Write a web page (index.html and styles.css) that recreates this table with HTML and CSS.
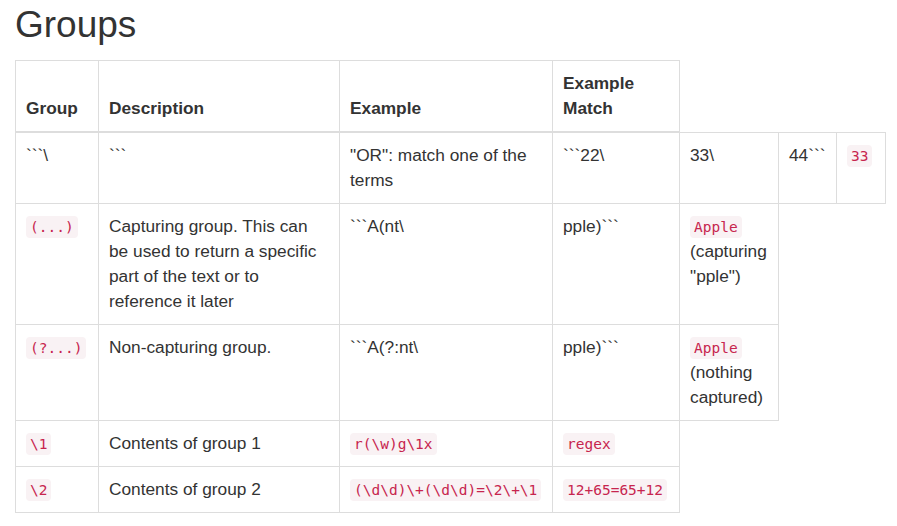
FILE: index.html
```html
<!DOCTYPE html>
<html>
<head>
<meta charset="utf-8">
<link rel="stylesheet" href="styles.css">
</head>
<body>
<div class="page">
  <h1 class="title">Groups</h1>
  <table class="grid">
    <colgroup>
      <col class="c1"><col class="c2"><col class="c3"><col class="c4"><col class="c5"><col class="c6"><col class="c7">
    </colgroup>
    <thead>
      <tr><th>Group</th><th>Description</th><th>Example</th><th>Example Match</th></tr>
    </thead>
    <tbody>
      <tr><td>```\</td><td>```</td><td>"OR": match one of the terms</td><td>```22\</td><td>33\</td><td>44```</td><td><code>33</code></td></tr>
      <tr><td><code>(...)</code></td><td>Capturing group. This can be used to return a specific part of the text or to reference it later</td><td>```A(nt\</td><td>pple)```</td><td><code>Apple</code> (capturing "pple")</td></tr>
      <tr><td><code>(?...)</code></td><td>Non-capturing group.</td><td>```A(?:nt\</td><td>pple)```</td><td><code>Apple</code> (nothing captured)</td></tr>
      <tr><td><code>\1</code></td><td>Contents of group 1</td><td><code>r(\w)g\1x</code></td><td><code>regex</code></td></tr>
      <tr><td><code>\2</code></td><td>Contents of group 2</td><td><code>(\d\d)\+(\d\d)=\2\+\1</code></td><td><code>12+65=65+12</code></td></tr>
    </tbody>
  </table>
</div>
</body>
</html>
```
FILE: styles.css
```css
* { box-sizing: border-box; }
html, body { margin: 0; background: #fff; }
body {
  font-family: "Liberation Sans", Arial, sans-serif;
  font-size: 17.3px;
  line-height: 25px;
  color: #333;
}
.page { padding: 5px 12px 0 15px; }
.title {
  margin: 0 0 15px 0;
  font-size: 37px;
  line-height: 40px;
  font-weight: 500;
  color: #333;
}
.grid {
  border-collapse: collapse;
  border-spacing: 0;
  table-layout: fixed;
  width: 871px;
  border: none;
}
.c1 { width: 83px; }
.c2 { width: 241px; }
.c3 { width: 213px; }
.c4 { width: 127px; }
.c5 { width: 99px; }
.c6 { width: 58px; }
.c7 { width: 49px; }
.grid th, .grid td {
  border: 1px solid #ddd;
  padding: 10px;
  text-align: left;
  vertical-align: top;
}
.grid th {
  font-weight: bold;
  vertical-align: bottom;
  border-bottom: 2px solid #ddd;
}
code {
  font-family: "DejaVu Sans Mono", Menlo, monospace;
  font-size: 14.5px;
  line-height: 1;
  padding: 3px 4px;
  color: #c7254e;
  background: #f9f2f4;
  border-radius: 4px;
}
```
